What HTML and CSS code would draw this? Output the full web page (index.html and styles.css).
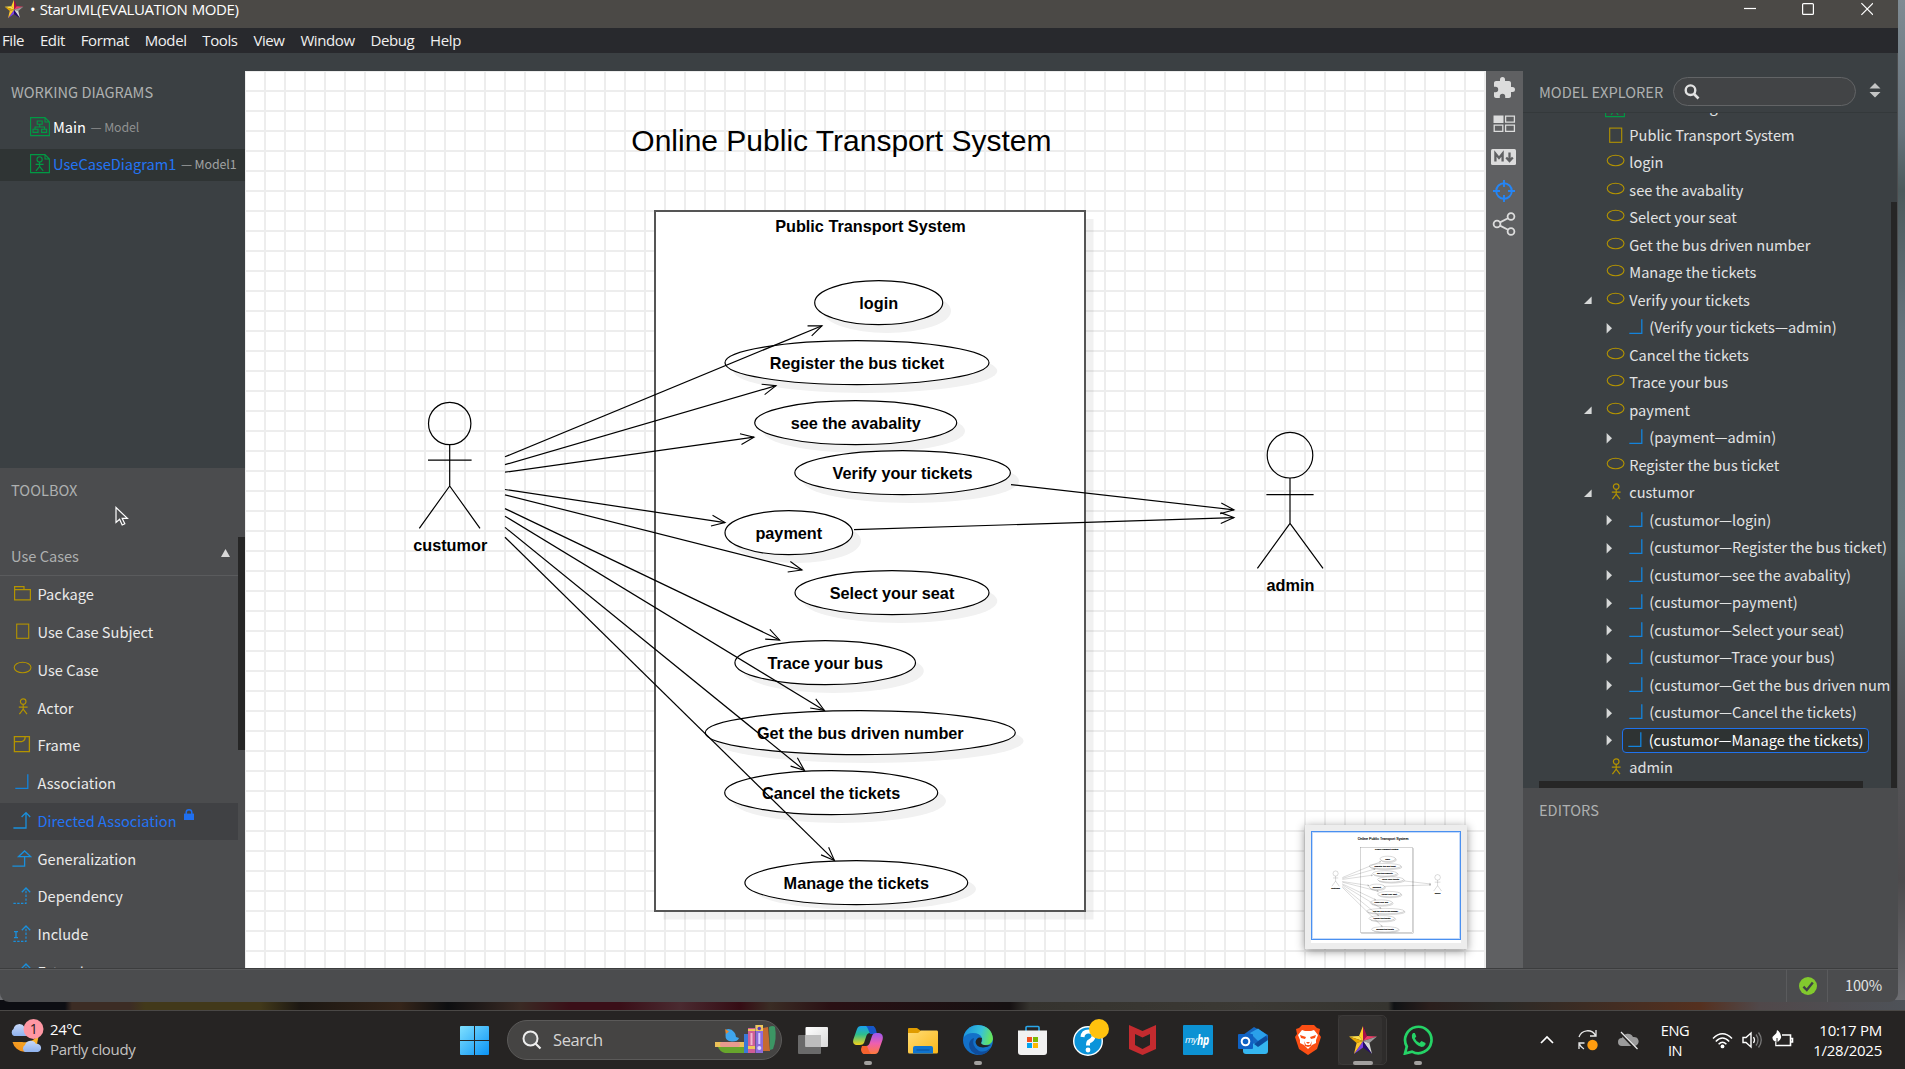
FILE: index.html
```html
<!DOCTYPE html>
<html lang="en">
<head>
<meta charset="utf-8">
<title>StarUML (EVALUATION MODE)</title>
<link rel="stylesheet" href="styles.css">
</head>
<body>
<svg class="defs" width="0" height="0" aria-hidden="true">
  <defs>
    <linearGradient id="gw" x1="0" y1="0" x2="1" y2="1"><stop offset="0" stop-color="#7fe0ff"/><stop offset="1" stop-color="#0a93f5"/></linearGradient>
    <linearGradient id="gcopA" x1="0" y1="0" x2="0" y2="1"><stop offset="0" stop-color="#18a0f0"/><stop offset=".45" stop-color="#2ebf8c"/><stop offset="1" stop-color="#f5d21a"/></linearGradient>
    <linearGradient id="gcopB" x1="0" y1="0" x2="0" y2="1"><stop offset="0" stop-color="#9a57f0"/><stop offset=".5" stop-color="#ee5fae"/><stop offset="1" stop-color="#ff7a3c"/></linearGradient>
    <linearGradient id="gfold" x1="0" y1="0" x2="1" y2="1"><stop offset="0" stop-color="#ffdc75"/><stop offset="1" stop-color="#fbb81a"/></linearGradient>
    <linearGradient id="gedge" x1="0" y1=".2" x2="1" y2=".4"><stop offset="0" stop-color="#1c93dd"/><stop offset=".6" stop-color="#37c2d8"/><stop offset="1" stop-color="#68e658"/></linearGradient>
    <linearGradient id="gpane" x1="0" y1="0" x2="1" y2="1"><stop offset="0" stop-color="#fff"/><stop offset="1" stop-color="#d9d9d9"/></linearGradient>
    <linearGradient id="gmoon" x1="0" y1="1" x2="1" y2="0"><stop offset="0" stop-color="#f08a1c"/><stop offset="1" stop-color="#fbc02d"/></linearGradient>
    <linearGradient id="gcloud" x1="0" y1="0" x2="0" y2="1"><stop offset="0" stop-color="#c7d8f8"/><stop offset="1" stop-color="#8fb2ee"/></linearGradient>
    <marker id="arrow" markerUnits="userSpaceOnUse" markerWidth="30" markerHeight="20" refX="0" refY="0" orient="auto" overflow="visible">
      <path d="M-13.4,-5.4 L0,0 L-13.4,5.4" fill="none" stroke="#000" stroke-width="1.1"/>
    </marker>
    <symbol id="i-rect" viewBox="0 0 20 20"><rect x="4.7" y="2.1" width="12" height="14.2" fill="none" stroke="#b39300" stroke-width="1.1"/></symbol>
    <symbol id="i-oval" viewBox="0 0 20 20"><ellipse cx="10.6" cy="7.5" rx="8.4" ry="5.2" fill="none" stroke="#b39300" stroke-width="1.1"/></symbol>
    <symbol id="i-actor" viewBox="0 0 20 20"><g fill="none" stroke="#b39300" stroke-width="1.2"><circle cx="11.2" cy="3.6" r="2.8"/><path d="M11.2 6.4V11.2M6.8 9.2H15.6M11.2 11.2L7.4 16.2M11.2 11.2L15 16.2"/></g></symbol>
    <symbol id="i-assoc" viewBox="0 0 20 20"><path d="M3.3 15.3H15.8V1.2" fill="none" stroke="#1383dc" stroke-width="1.3"/></symbol>
    <symbol id="i-package" viewBox="0 0 20 20"><path d="M2.6 5.6V2.6H12V5.6M2.6 5.6H18.4V15.8H2.6Z" fill="none" stroke="#b39300" stroke-width="1.2"/></symbol>
    <symbol id="i-frame" viewBox="0 0 20 20"><path d="M2.4 1.6H17.4V16.6H2.4ZM2.4 6.6H9.6Q13.2 6 13.2 1.6" fill="none" stroke="#b39300" stroke-width="1.3"/></symbol>
    <symbol id="i-dassoc" viewBox="0 0 20 20"><path d="M1.4 17H14V2.2M9.6 6L14 1.6L18.2 6" fill="none" stroke="#1990dd" stroke-width="1.3"/></symbol>
    <symbol id="i-general" viewBox="0 0 20 20"><path d="M.4 17.2H12.6V7.6M6.6 7.6L12.6 2L18.6 7.6Z" fill="none" stroke="#1990dd" stroke-width="1.3"/></symbol>
    <symbol id="i-depend" viewBox="0 0 20 20"><path d="M1.4 17.4H14V2.4" fill="none" stroke="#1990dd" stroke-width="1.2" stroke-dasharray="2.4 1.4"/><path d="M9.8 6.2L14 2L18.2 6.2" fill="none" stroke="#1990dd" stroke-width="1.3"/></symbol>
    <symbol id="i-include" viewBox="0 0 20 20"><path d="M1.4 17.4H14V2.4" fill="none" stroke="#1990dd" stroke-width="1.2" stroke-dasharray="2.4 1.4"/><path d="M9.8 6.2L14 2L18.2 6.2M2 7.6H6M4 7.6V13.6M2 13.6H6" fill="none" stroke="#1990dd" stroke-width="1.3"/></symbol>
    <symbol id="i-class" viewBox="0 0 20 20"><g fill="none" stroke="#009a44" stroke-width="1.1"><path d="M14.5 .6H.6V18.6H19.4V5L15 .6V5H19.4"/><path d="M7.2 4H12.2V7.2H7.2ZM9.7 7.2V10M5 12.2V10H14.6V12.2M3 12.2H8V15.4H3ZM11.6 12.2H16.6V15.4H11.6Z"/></g></symbol>
    <symbol id="i-usecase" viewBox="0 0 20 20"><g fill="none" stroke="#009a44" stroke-width="1.1"><path d="M14.5 .6H.6V18.6H19.4V5L15 .6V5H19.4"/><circle cx="9.6" cy="5.4" r="2.6"/><path d="M9.6 8V12.4M5.6 10.4H13.6M9.6 12.4L6 16.8M9.6 12.4L13.2 16.8"/></g></symbol>
    <symbol id="a-open" viewBox="0 0 10 10"><path d="M1 9H8.6V1.6Z" fill="#d6d8d8"/></symbol>
    <symbol id="a-closed" viewBox="0 0 10 12"><path d="M1.6 1V11.4L7 6.2Z" fill="#d6d8d8"/></symbol>
    <symbol id="star" viewBox="0 0 30 30">
      <path d="M15 1V16L11 11Z" fill="#ffd02a"/><path d="M15 1V16L19 11Z" fill="#a80f4a"/>
      <path d="M1 11.5L11 11L15 16Z" fill="#ffe04d"/><path d="M1 11.5L15 16L8.6 18Z" fill="#e8a800"/>
      <path d="M19 11L29 11.5L15 16Z" fill="#f03a66"/><path d="M29 11.5L15 16L21.4 18Z" fill="#9a9a9a"/>
      <path d="M15 16L21.4 18L24 29Z" fill="#d6d6d6"/><path d="M15 16L24 29L15 22.5Z" fill="#240a6e"/>
      <path d="M15 16V22.5L6 29Z" fill="#7a3fe0"/><path d="M15 16L6 29L8.6 18Z" fill="#ffc62e"/>
    </symbol>
  </defs>
</svg>

<div class="desktop">
  <div class="window">
    <header class="titlebar">
      <svg class="app-icon" width="20" height="20"><use href="#star"/></svg>
      <span class="title">• StarUML(EVALUATION MODE)</span>
      <svg class="win-controls" width="130" height="16" viewBox="0 0 130 16"><g fill="none" stroke="#fff" stroke-width="1.2"><path d="M1 8.5H13"/><rect x="59.6" y="3.6" width="10.8" height="10.8" rx="1"/><path d="M118.4 3.2L130 14.8M130 3.2L118.4 14.8"/></g></svg>
    </header>
    <nav class="menubar"><span>File</span><span>Edit</span><span>Format</span><span>Model</span><span>Tools</span><span>View</span><span>Window</span><span>Debug</span><span>Help</span></nav>

    <div class="workspace">
      <aside class="sidebar">
        <section class="working">
          <h2>WORKING DIAGRAMS</h2>
          <div class="doc"><svg width="20" height="20"><use href="#i-class"/></svg><b>Main</b><small>— Model</small></div>
          <div class="doc active"><svg width="20" height="20"><use href="#i-usecase"/></svg><b>UseCaseDiagram1</b><small>— Model1</small></div>
        </section>
        <section class="toolbox">
          <h2>TOOLBOX</h2>
          <div class="group"><span>Use Cases</span><svg width="9" height="8"><path d="M4.5 0L9 8H0Z" fill="#d8d8d8"/></svg></div>
          <div class="tools">
            <div class="tool"><svg width="20" height="20"><use href="#i-package"/></svg>Package</div>
            <div class="tool"><svg width="20" height="20"><use href="#i-rect"/></svg>Use Case Subject</div>
            <div class="tool"><svg width="20" height="20"><use href="#i-oval"/></svg>Use Case</div>
            <div class="tool"><svg width="20" height="20"><use href="#i-actor"/></svg>Actor</div>
            <div class="tool"><svg width="20" height="20"><use href="#i-frame"/></svg>Frame</div>
            <div class="tool"><svg width="20" height="20"><use href="#i-assoc"/></svg>Association</div>
            <div class="tool active"><svg width="20" height="20"><use href="#i-dassoc"/></svg>Directed Association<svg class="lock" width="10" height="11"><path d="M0 4.6H10V11H0Z" fill="#1f6ff0"/><path d="M2.2 5V3.4Q2.2 .8 5 .8T7.8 3.4V5" fill="none" stroke="#1f6ff0" stroke-width="1.5"/></svg></div>
            <div class="tool"><svg width="20" height="20"><use href="#i-general"/></svg>Generalization</div>
            <div class="tool"><svg width="20" height="20"><use href="#i-depend"/></svg>Dependency</div>
            <div class="tool"><svg width="20" height="20"><use href="#i-include"/></svg>Include</div>
            <div class="tool"><svg width="20" height="20"><use href="#i-include"/></svg>Extend</div>
          </div>
          <i class="scroll-thumb"></i>
          <svg class="cursor" width="15" height="21" viewBox="0 0 15 21"><path d="M1 1.5V16.5L4.6 13.2L7.2 19L9.8 17.8L7.2 12.4H12.4Z" fill="#4b4c4e" stroke="#fff" stroke-width="1.2"/></svg>
        </section>
      </aside>

      <main class="canvas">
        <svg class="diagram" width="1241" height="897" viewBox="245 71 1241 897">
          <g id="model">
            <text class="caption" x="631.3" y="151">Online Public Transport System</text>
            <rect x="663.5" y="219" width="430" height="700.5" fill="#000" fill-opacity=".055"/>
            <rect x="655" y="211" width="430" height="700" fill="#fff" stroke="#555" stroke-width="2"/>
            <g fill="#f1f1f1">
              <ellipse cx="887" cy="311" rx="64" ry="22"/><ellipse cx="865.3" cy="371" rx="132" ry="22"/><ellipse cx="864" cy="431" rx="101" ry="22"/><ellipse cx="911" cy="481" rx="108" ry="22"/><ellipse cx="797" cy="541" rx="64" ry="22"/><ellipse cx="900.3" cy="601" rx="97" ry="22"/><ellipse cx="833.5" cy="671" rx="90.3" ry="22"/><ellipse cx="868.6" cy="741" rx="155" ry="22"/><ellipse cx="839.5" cy="801" rx="106.5" ry="22"/><ellipse cx="864.6" cy="889" rx="111.4" ry="21"/>
            </g>
            <g fill="#fff" stroke="#000" stroke-width="1.2">
              <ellipse cx="878.7" cy="302.7" rx="64" ry="22"/><ellipse cx="857" cy="362.7" rx="132" ry="22"/><ellipse cx="855.7" cy="422.7" rx="101" ry="22"/><ellipse cx="902.6" cy="472.7" rx="107.8" ry="22"/><ellipse cx="788.8" cy="532.7" rx="63.8" ry="22"/><ellipse cx="892" cy="592.7" rx="97" ry="22"/><ellipse cx="825.2" cy="662.7" rx="90.3" ry="22"/><ellipse cx="860.3" cy="732.7" rx="155" ry="22"/><ellipse cx="831.2" cy="792.7" rx="106.5" ry="22"/><ellipse cx="856.3" cy="882.7" rx="111.4" ry="22"/>
            </g>
            <g class="names">
              <text x="870.4" y="232">Public Transport System</text>
              <text x="878.7" y="309">login</text><text x="857" y="369">Register the bus ticket</text><text x="855.7" y="429">see the avabality</text><text x="902.6" y="479">Verify your tickets</text><text x="788.8" y="539">payment</text><text x="892" y="599">Select your seat</text><text x="825.2" y="669">Trace your bus</text><text x="860.3" y="739">Get the bus driven number</text><text x="831.2" y="799">Cancel the tickets</text><text x="856.3" y="889">Manage the tickets</text>
              <text x="450.2" y="551">custumor</text><text x="1290.5" y="591">admin</text>
            </g>
            <g fill="none" stroke="#000" stroke-width="1.2">
              <circle cx="449.7" cy="423.5" r="21.2"/><path d="M449.7 444.7V486M428 460.2H471.6M449.7 486L419.3 528.3M449.7 486L480 528.3"/>
              <circle cx="1290" cy="455.2" r="22.8"/><path d="M1290 478V523.4M1266.4 494.6H1313.6M1290 523.4L1257.4 568.3M1290 523.4L1323 568.3"/>
              <path marker-end="url(#arrow)" d="M505 456.8L822 325.7"/><path marker-end="url(#arrow)" d="M505 464.7L776 385.7"/><path marker-end="url(#arrow)" d="M505 472.2L754 437.2"/><path marker-end="url(#arrow)" d="M505 489.5L725 522.6"/><path marker-end="url(#arrow)" d="M505 494.8L802 570"/><path marker-end="url(#arrow)" d="M505 508.6L779.6 640"/><path marker-end="url(#arrow)" d="M505 516.2L824.4 710.4"/><path marker-end="url(#arrow)" d="M505 527.4L804.4 770.4"/><path marker-end="url(#arrow)" d="M505 537.2L834.4 860.4"/>
              <path marker-end="url(#arrow)" d="M1011 484.6L1234 509.8"/><path marker-end="url(#arrow)" d="M854 529.7L1234 517.6"/>
            </g>
          </g>
        </svg>
        <div class="minimap"><svg width="150" height="112" viewBox="1311 831 150 112"><rect x="1311" y="831" width="150" height="112" fill="#fff"/><use class="mini-model" href="#model" transform="translate(1281 822.1) scale(.1214)"/><rect x="1311.5" y="831.5" width="149" height="108" fill="none" stroke="#4a90f0"/><rect x="1312.5" y="832.5" width="147" height="106" fill="none" stroke="#c4dafa"/></svg></div>
      </main>

      <div class="rail">
        <svg width="24" height="24" viewBox="0 0 24 24"><path fill="#dcdcdc" d="M20.5 11H19V7c0-1.1-.9-2-2-2h-4V3.5a2.5 2.5 0 0 0-5 0V5H4c-1.1 0-2 .9-2 2v3.8h1.500a2.700 2.700 0 0 1 0 5.400H2V20c0 1.100.9 2 2 2h3.800v-1.500a2.700 2.700 0 0 1 5.400 0V22H17c1.100 0 2-.9 2-2v-4h1.500a2.500 2.500 0 0 0 0-5z"/></svg>
        <svg width="24" height="24" viewBox="0 0 24 24"><path fill="#dcdcdc" d="M1.500 3.500H11.500V11H1.500Z"/><g fill="none" stroke="#dcdcdc" stroke-width="1.300"><path d="M13.600 4.200H22.400V10.200H13.600ZM2.200 13.200H10.800V19.400H2.200ZM13.600 13.200H22.400V19.400H13.600Z"/></g></svg>
        <svg width="25" height="24" viewBox="0 0 25 24"><rect x="0" y="4" width="25" height="16" rx="1.500" fill="#dcdcdc"/><path d="M4.400 16.500V8.500L8 13L11.600 8.500V16.500M18.500 7.500V15M15.200 12.500L18.500 16L21.800 12.500" fill="none" stroke="#5f6062" stroke-width="2.300"/></svg>
        <svg width="24" height="24" viewBox="0 0 24 24"><g fill="none" stroke="#2585f5" stroke-width="1.900"><circle cx="12" cy="12" r="7.800"/><path d="M12 1V8M12 16V23M1 12H8M16 12H23"/></g></svg>
        <svg width="24" height="24" viewBox="0 0 24 24"><g fill="none" stroke="#dcdcdc" stroke-width="1.800"><circle cx="19" cy="4.500" r="3.400"/><circle cx="19" cy="19.500" r="3.400"/><circle cx="5" cy="12" r="3.400"/><path d="M8 10.400L16 6.200M8 13.600L16 17.800"/></g></svg>
      </div>

      <aside class="explorer">
        <div class="explorer-head">
          <h2>MODEL EXPLORER</h2>
          <div class="search-box"><svg width="16" height="16" viewBox="0 0 16 16"><circle cx="6.500" cy="6.200" r="4.800" fill="none" stroke="#e2e2e2" stroke-width="2.400"/><path d="M10 10L14.500 14.500" stroke="#e2e2e2" stroke-width="2.600"/></svg></div>
          <svg class="sort" width="12" height="15"><path d="M6 0L11.500 5.600H.5ZM6 14.500L11.500 9H.5Z" fill="#c4c5c5"/></svg>
        </div>
        <div class="tree">
          <div class="rows">
            <div class="row"><i></i><svg width="20" height="20"><use href="#i-usecase"/></svg><span>UseCaseDiagram1</span></div>
            <div class="row"><i></i><svg width="20" height="20"><use href="#i-rect"/></svg><span>Public Transport System</span></div>
            <div class="row"><i></i><svg width="20" height="20"><use href="#i-oval"/></svg><span>login</span></div>
            <div class="row"><i></i><svg width="20" height="20"><use href="#i-oval"/></svg><span>see the avabality</span></div>
            <div class="row"><i></i><svg width="20" height="20"><use href="#i-oval"/></svg><span>Select your seat</span></div>
            <div class="row"><i></i><svg width="20" height="20"><use href="#i-oval"/></svg><span>Get the bus driven number</span></div>
            <div class="row"><i></i><svg width="20" height="20"><use href="#i-oval"/></svg><span>Manage the tickets</span></div>
            <div class="row"><i><svg width="10" height="10"><use href="#a-open"/></svg></i><svg width="20" height="20"><use href="#i-oval"/></svg><span>Verify your tickets</span></div>
            <div class="row child"><i><svg width="10" height="12"><use href="#a-closed"/></svg></i><svg width="20" height="20"><use href="#i-assoc"/></svg><span>(Verify your tickets—admin)</span></div>
            <div class="row"><i></i><svg width="20" height="20"><use href="#i-oval"/></svg><span>Cancel the tickets</span></div>
            <div class="row"><i></i><svg width="20" height="20"><use href="#i-oval"/></svg><span>Trace your bus</span></div>
            <div class="row"><i><svg width="10" height="10"><use href="#a-open"/></svg></i><svg width="20" height="20"><use href="#i-oval"/></svg><span>payment</span></div>
            <div class="row child"><i><svg width="10" height="12"><use href="#a-closed"/></svg></i><svg width="20" height="20"><use href="#i-assoc"/></svg><span>(payment—admin)</span></div>
            <div class="row"><i></i><svg width="20" height="20"><use href="#i-oval"/></svg><span>Register the bus ticket</span></div>
            <div class="row"><i><svg width="10" height="10"><use href="#a-open"/></svg></i><svg width="20" height="20"><use href="#i-actor"/></svg><span>custumor</span></div>
            <div class="row child"><i><svg width="10" height="12"><use href="#a-closed"/></svg></i><svg width="20" height="20"><use href="#i-assoc"/></svg><span>(custumor—login)</span></div>
            <div class="row child"><i><svg width="10" height="12"><use href="#a-closed"/></svg></i><svg width="20" height="20"><use href="#i-assoc"/></svg><span>(custumor—Register the bus ticket)</span></div>
            <div class="row child"><i><svg width="10" height="12"><use href="#a-closed"/></svg></i><svg width="20" height="20"><use href="#i-assoc"/></svg><span>(custumor—see the avabality)</span></div>
            <div class="row child"><i><svg width="10" height="12"><use href="#a-closed"/></svg></i><svg width="20" height="20"><use href="#i-assoc"/></svg><span>(custumor—payment)</span></div>
            <div class="row child"><i><svg width="10" height="12"><use href="#a-closed"/></svg></i><svg width="20" height="20"><use href="#i-assoc"/></svg><span>(custumor—Select your seat)</span></div>
            <div class="row child"><i><svg width="10" height="12"><use href="#a-closed"/></svg></i><svg width="20" height="20"><use href="#i-assoc"/></svg><span>(custumor—Trace your bus)</span></div>
            <div class="row child"><i><svg width="10" height="12"><use href="#a-closed"/></svg></i><svg width="20" height="20"><use href="#i-assoc"/></svg><span>(custumor—Get the bus driven number)</span></div>
            <div class="row child"><i><svg width="10" height="12"><use href="#a-closed"/></svg></i><svg width="20" height="20"><use href="#i-assoc"/></svg><span>(custumor—Cancel the tickets)</span></div>
            <div class="row child"><i><svg width="10" height="12"><use href="#a-closed"/></svg></i><div class="selected"><svg width="20" height="20"><use href="#i-assoc"/></svg><span>(custumor—Manage the tickets)</span></div></div>
            <div class="row"><i></i><svg width="20" height="20"><use href="#i-actor"/></svg><span>admin</span></div>
          </div>
          <i class="h-thumb"></i><i class="v-thumb"></i>
        </div>
        <section class="editors"><h2>EDITORS</h2></section>
      </aside>
    </div>

    <footer class="statusbar">
      <div class="status-ok"><svg width="18" height="18" viewBox="0 0 18 18"><circle cx="9" cy="9" r="9" fill="#82c92e"/><path d="M4.400 9.600L7.800 13L13.800 5.600" fill="none" stroke="#3f4245" stroke-width="2.400"/></svg></div>
      <div class="zoom-level">100%</div>
    </footer>
  </div>

  <div class="taskbar">
    <div class="weather">
      <svg width="34" height="38" viewBox="0 0 34 38"><path d="M2.500 24A13 13 0 0 0 27 26L29 16Q22 26 12 24Z" fill="url(#gmoon)"/><path d="M4 18a4 4 0 0 1-.5-7 6 6 0 0 1 11-2 5 5 0 0 1 2 9Z" fill="url(#gcloud)"/><path d="M15 34a4 4 0 0 1 0-7 6 6 0 0 1 11-1 4 4 0 0 1 2 8Z" fill="url(#gcloud)"/><circle cx="23.500" cy="11" r="10" fill="#ff97a3"/><text x="23.500" y="16" text-anchor="middle" class="badge-num">1</text></svg>
      <div><p>24°C</p><p class="dim">Partly cloudy</p></div>
    </div>
    <div class="apps">
      <div class="app"><svg width="29" height="29" viewBox="0 0 29 29"><path fill="url(#gw)" d="M0 1Q0 0 1 0H14V14H0ZM15 0H28Q29 0 29 1V14H15ZM0 15H14V29H1Q0 29 0 28ZM15 15H29V28Q29 29 28 29H15Z"/></svg></div>
      <div class="search">
        <svg width="20" height="20" viewBox="0 0 20 20"><circle cx="8.500" cy="8.500" r="7" fill="#5a5b5b" stroke="#eee" stroke-width="2"/><path d="M13.500 13.500L18.500 18.500" stroke="#eee" stroke-width="2.200"/></svg>
        <span>Search</span>
        <svg class="books" width="63" height="30" viewBox="0 0 63 30"><path d="M4 22H30V28H11Q6 27 4 22Z" fill="#67a52c"/><path d="M1 17H30V22H1Z" fill="#ecc158"/><rect x="6" y="17" width="20" height="5" rx="2" fill="#e89a8e"/><path d="M12 4.500Q17 3 20 7Q22 9 22 12L25 13Q24 16.500 18 16.500Q11 16 11.500 10Z" fill="#3fa5ec"/><path d="M11 4L15 6.500L12 9Z" fill="#e8862a"/><path d="M30 9H34V28H30Z" fill="#3a78d8"/><path d="M34 3H41V28H34Z" fill="#cf5d96"/><path d="M36.500 8H38.500V20H36.500Z" fill="#f0b6cf"/><path d="M41.500 0H49V28H41.500Z" fill="#8d6cdb"/><path d="M41.500 0H49V6H41.500ZM34 21H41V24H34ZM34 4H41V6H34ZM49 20H55V22H49Z" fill="#eec75a"/><circle cx="45.300" cy="3.500" r="1.800" fill="#5b3cb8"/><circle cx="45.300" cy="23" r="2" fill="#e0d4ff"/><path d="M44.300 8H46.300V19H44.300Z" fill="#d9ccff"/><path d="M49 3L54 2L56 26H49Z" fill="#c56a30"/><path d="M55 2Q59 0 61 2Q63 14 59 24L56 25Z" fill="#3c9664"/></svg>
      </div>
      <div class="app"><svg width="30" height="27" viewBox="0 0 30 27"><rect x="0" y="8" width="23" height="19" rx="1" fill="#6a6a6a"/><rect x="7.500" y="0" width="22.500" height="20" rx="1" fill="url(#gpane)"/><rect x="7.500" y="8" width="15.500" height="12" fill="#bdbdbd"/></svg></div>
      <div class="app run"><svg width="30" height="28" viewBox="0 0 30 28"><path d="M8 0H19Q22 0 21 4L20 7H17Q14 7 13 11L11 17Q10 19 7 19H3Q-1 18 .5 13L4 3Q5 0 8 0Z" fill="url(#gcopA)"/><path d="M13 0H19Q22 0 23 4L24 8H17L15 3Q14 .5 13 0Z" fill="#1656c8"/><path d="M22 28H11Q8 27 9 23L10 20H13Q16 20 17 16L19 10Q20 7 23 7H26Q31 8 29.500 14L26 24Q25 28 22 28Z" fill="url(#gcopB)"/><path d="M9 20H14L16 25Q17 27 18 28H11Q8 27 8 23Z" fill="#f5622e"/></svg></div>
      <div class="app"><svg width="30" height="27" viewBox="0 0 30 27"><path d="M0 2Q0 1 1 1H9L13 4V9H0Z" fill="#e09c00"/><path d="M0 6H10L13 3.500H29Q30 3.500 30 5V25Q30 26.500 28.500 26.500H1.500Q0 26.500 0 25Z" fill="url(#gfold)"/><path d="M5 26.500V21Q5 19 7 19H23Q25 19 25 21V26.500Z" fill="#0f74cf"/><path d="M8.500 23H21.500" stroke="#0b4e9a"/></svg></div>
      <div class="app run"><svg width="30" height="30" viewBox="0 0 30 30"><circle cx="15" cy="15" r="15" fill="#1371c9"/><path d="M1 10Q5 0 15 0Q29 1 30 14Q29 20 22 20Q18 20 18 18Q20 16 19 13Q17 8 10 8Q4 8 1 12Z" fill="url(#gedge)"/><path d="M11 13Q8 21 16 26Q22 28 27 23Q24 30 16 30Q6 28 6 19Q7 14 11 13Z" fill="#0f4d9c"/><path d="M19 13Q14 11 12.500 17Q13 22 20 22.500Q25 22 28 20Q25 20.500 21 20Q17 19 18.500 16.500Z" fill="#242322"/></svg></div>
      <div class="app"><svg width="29" height="30" viewBox="0 0 29 30"><path d="M8 6V2.500Q8 1.500 9 1.500H20Q21 1.500 21 2.500V6" fill="none" stroke="#2aa6ea" stroke-width="1.600"/><path d="M0 5.500H29V27Q29 30 26 30H3Q0 30 0 27Z" fill="#f1f1f1"/><path d="M9 12H14V17H9Z" fill="#f05020"/><path d="M15 12H20V17H15Z" fill="#7cb800"/><path d="M9 18H14V23H9Z" fill="#00a4ef"/><path d="M15 18H20V23H15Z" fill="#ffb800"/></svg></div>
      <div class="app"><svg class="over" width="36" height="37" viewBox="0 0 36 37"><circle cx="15" cy="22" r="14.300" fill="#0b94da" stroke="#fff" stroke-width="1.400"/><path d="M9.500 18Q10 12.500 15.500 12.500T20.500 17.500Q20 21 16 22.500Q15 23 15 26.500" fill="none" stroke="#fff" stroke-width="4"/><circle cx="15" cy="31" r="2.400" fill="#fff"/><circle cx="26" cy="10" r="10" fill="#ffc20e"/></svg></div>
      <div class="app"><svg width="27" height="30" viewBox="0 0 27 30"><path d="M0 0L13.500 6L27 0V24L13.500 30L0 24ZM6 9V20L13.500 24L21 20V9L13.500 12.500Z" fill="#c42b2f" fill-rule="evenodd"/></svg></div>
      <div class="app"><svg width="30" height="30" viewBox="0 0 30 30"><rect width="30" height="30" rx="1" fill="#0c92d3"/><text x="2" y="18" class="hp-my">my</text><text x="14" y="20" class="hp-hp" textLength="12" lengthAdjust="spacingAndGlyphs">hp</text></svg></div>
      <div class="app"><svg width="30" height="27" viewBox="0 0 30 27"><path d="M5 8L16 0L30 8V14L20 20H5Z" fill="#1566c0"/><path d="M12 6L20 1.500L29 8L20 14Z" fill="#2aa0ea"/><path d="M5 24V20L30 12V24Q30 27 27 27H8Q5 27 5 24Z" fill="#35b6f0"/><path d="M16 17L28 9L30 13L20 20Z" fill="#0c4b9c"/><rect x="0" y="7" width="15" height="15" rx="1" fill="#0f62c4"/><circle cx="7.500" cy="14.500" r="3.800" fill="none" stroke="#fff" stroke-width="2"/></svg></div>
      <div class="app"><svg width="26" height="30" viewBox="0 0 26 30"><path d="M7 0H19L22 3L25 4L24 9L26 12L22 24L13 30L4 24L0 12L2 9L1 4L4 3Z" fill="#fb4e14"/><path d="M7 5L10 6H16L19 5L23 10L21 15V18L17 20L13 24L9 20L5 18V15L3 10Z" fill="#fff"/><path d="M5 10L11 12L10 14L6 13ZM21 10L15 12L16 14L20 13ZM11 17H15L13 19ZM9 16L11 20H15L17 16L16 21L13 22L10 21Z" fill="#fb4e14"/></svg></div>
      <div class="app current"><i></i><svg width="30" height="30"><use href="#star"/></svg></div>
      <div class="app run"><svg width="30" height="30" viewBox="0 0 30 30"><path d="M2 28.500L3.800 21.500A13.200 13.200 0 1 1 9 26.600Z" fill="none" stroke="#25d366" stroke-width="2.700"/><path d="M10 8Q8 10 9 13Q12 20 18.500 22Q21 22 22.500 19.500V18L18.500 16L16.500 18Q13 16.500 11.800 13.300L13.300 11.500L11.800 8Z" fill="#25d366"/></svg></div>
    </div>
    <div class="tray">
      <svg width="14" height="10" viewBox="0 0 14 10"><path d="M1 8L7 2L13 8" fill="none" stroke="#fff" stroke-width="1.700"/></svg>
      <svg class="t-sync" width="22" height="22" viewBox="0 0 22 22"><path d="M2 8A9 9 0 0 1 18.500 6.500M19 1V7H13M7 20A9 9 0 0 1 2.500 15M2 20V14H7.500" fill="none" stroke="#e8e8e8" stroke-width="1.300"/><circle cx="15.500" cy="16" r="5.200" fill="#ff9c0f"/></svg>
      <svg class="t-cloud" width="21" height="19" viewBox="0 0 21 19"><path d="M4 15A4 4 0 0 1 4 7A6 6 0 0 1 15 6A4.600 4.600 0 0 1 17 15Z" fill="#9b9b9b"/><path d="M2 1L18 18" stroke="#262423" stroke-width="3"/><path d="M3 1L19.500 18" stroke="#ededed" stroke-width="1.200"/></svg>
      <div class="lang"><p>ENG</p><p>IN</p></div>
      <svg class="t-wifi" width="21" height="17" viewBox="0 0 21 17"><g fill="none" stroke="#fff" stroke-width="1.500"><path d="M1 6.500Q10.500-3 20 6.500M3.800 9.500Q10.500 2.500 17.200 9.500M6.600 12.300Q10.500 8 14.400 12.300"/></g><circle cx="10.500" cy="14.400" r="1.900" fill="#fff"/></svg>
      <svg class="t-vol" width="21" height="18" viewBox="0 0 21 18"><path d="M1 6.500H4L9 2V16L4 11.500H1Z" fill="none" stroke="#fff" stroke-width="1.400"/><path d="M11.500 6Q13.500 9 11.500 12" fill="none" stroke="#fff" stroke-width="1.300"/><path d="M14 3.500Q18 9 14 14.500M16.500 1.500Q22 9 16.500 16.500" fill="none" stroke="#777" stroke-width="1.300"/></svg>
      <svg class="t-bat" width="22" height="18" viewBox="0 0 22 18"><path d="M10 5H18.500V15.500H4V12M18.500 8.500H20.500V12H18.500" fill="none" stroke="#fff" stroke-width="1.600"/><path d="M5 0Q10 3 9 8Q8 11 5 12Q0 11 .5 7Q2 5 3 4.500Q5 3 5 0Z" fill="#fff"/><path d="M5 8V15" stroke="#262423"/></svg>
      <div class="clock"><p>10:17 PM</p><p>1/28/2025</p></div>
    </div>
  </div>
</div>
</body>
</html>
```
FILE: styles.css
```css
* { box-sizing: border-box; }
body { margin: 0; overflow: hidden; font-family: "Noto Sans CJK SC", "Noto Sans", sans-serif; font-size: 14.6px; color: #e2e3e3; }
h2, p { margin: 0; font-weight: 400; }
svg { display: block; flex: none; }
.defs { position: absolute; }

.desktop {
  width: 1905px; height: 1069px; display: flex; flex-direction: column; overflow: hidden;
  background:
    linear-gradient(90deg, #0d0e13 0 65px, #3c2c24 72px 130px, #42391a 145px 260px, #1c1712 300px, #35251a 400px, #0d0e10 448px, #3a2a24 520px, #3a0f18 570px 620px, #4a2a30 680px, #350c14 740px, #3a2c24 770px, #2a1014 830px, #161112 1010px, #35332e 1030px, #3b3934 1250px, #35342f 1388px, #101214 1394px, #2a1e1c 1430px, #2b2926 1500px, #55301f 1700px, #50484a 1760px, #4e5258) 0 1000px / 100% 11px no-repeat,
    linear-gradient(180deg, #7f8b93 0, #66737c 130px, #4d5a5c 190px, #66737c 330px, #6d7f83 550px, #5a5a5e 700px, #4c4a4c 880px, #6d6e72 1000px);
}
.window { width: 1898px; height: 1002px; display: flex; flex-direction: column; border-radius: 0 0 9px 9px; overflow: hidden; background: #4b4c4e; }
.titlebar { height: 28px; flex: none; display: flex; align-items: flex-start; background: #4b4946; color: #fff; }
.app-icon { margin: -1px 0 0 4px; }
.title { margin: -1px 0 0 6px; font: 15px/20px "Open Sans", sans-serif; letter-spacing: -.42px; word-spacing: 1px; }
.win-controls { margin: 0 25px 0 auto; }
.menubar { height: 25px; flex: none; display: flex; gap: 15.8px; padding-left: 2px; background: #28292d; font: 15px/25px "Open Sans", sans-serif; letter-spacing: -.4px; color: #f0f0f0; }

.workspace { height: 915px; flex: none; display: flex; width: 1897px; padding-top: 18px; background: #3b4043; }
.sidebar { width: 245px; display: flex; flex-direction: column; }
h2 { font-size: 14.6px; line-height: 22px; color: #aeb0b0; }
.working { height: 397px; }
.working h2 { padding: 10px 0 0 11px; height: 41px; }
.doc { height: 32px; margin-bottom: 5px; padding: 0 0 3px 30px; display: flex; align-items: center; white-space: nowrap; }
.doc svg { margin-top: 1px; }
.doc.active { background: #2f3434; }
.doc b { font-weight: 400; font-size: 14.6px; margin-left: 3px; color: #fff; }
.doc small { font-size: 12.400px; margin-left: 4.500px; letter-spacing: -.1px; color: #8f9191; }
.doc.active b { color: #2374f5; }
.doc.active small { color: #a0a2a2; }
.toolbox { position: relative; height: 500px; background: #4b4c4e; overflow: hidden; }
.toolbox h2 { padding: 11px 0 0 11px; height: 69px; }
.group { height: 39px; width: 238px; padding: 0 8px 2px 11px; display: flex; justify-content: space-between; align-items: center; border-bottom: 1px solid #5a5b5d; color: #aeb0b0; }
.group svg { margin-top: -5px; }
.tools { width: 238px; }
.tool { height: 37.750px; padding: 0 0 2px 11.500px; display: flex; align-items: center; gap: 6px; white-space: nowrap; color: #eaeaea; }
.tool svg { margin-top: 1px; }
.tool.active { background: #404144; color: #2374f5; }
.tool .lock { margin: -12px 0 0 1px; }
.scroll-thumb { position: absolute; right: 0; top: 69px; width: 7px; height: 213px; background: #262626; }
.cursor { position: absolute; left: 115px; top: 38px; }

.canvas { position: relative; width: 1241px; overflow: hidden; background-color: #fff;
  background-image: linear-gradient(90deg, #ededed 2px, transparent 2px), linear-gradient(#ededed 2px, transparent 2px);
  background-size: 20px 20px; background-position: 19px 19px; }
.caption { font: 30px "Liberation Sans", Arial, sans-serif; }
.names { font: bold 16.250px "Liberation Sans", Arial, sans-serif; text-anchor: middle; }
.mini-model { stroke: #000; stroke-width: 1px; }
.minimap { position: absolute; left: 1060px; top: 754px; width: 162px; height: 124px; padding: 6px; background: #ededed; box-shadow: 0 2px 9px rgba(0,0,0,.45); }

.rail { width: 37px; padding: 5px 2px 0 0; display: flex; flex-direction: column; align-items: center; gap: 10px; background: #5f6062; }
.rail svg:nth-child(2) { margin-top: 2px; }
.rail svg:nth-child(3) { margin-top: -1px; }
.rail svg:nth-child(5) { margin-top: -1.500px; }

.explorer { width: 374px; display: flex; flex-direction: column; }
.explorer-head { height: 42px; flex: none; display: flex; align-items: flex-start; padding-left: 16px; border-bottom: 1px solid #34393b; }
.explorer-head h2 { width: 134px; padding-top: 10px; white-space: nowrap; }
.search-box { width: 183px; height: 29px; margin-top: 6px; padding: 6px 10px; border: 1px solid #626466; border-radius: 15px; background: #424446; }
.sort { margin: 12px 0 0 13px; }
.tree { position: relative; height: 675px; overflow: hidden; padding-right: 6px; }
.rows { margin-top: -18.700px; overflow: hidden; }
.row { height: 27.500px; padding-left: 60px; display: flex; align-items: center; white-space: nowrap; }
.row > i { width: 22px; flex: none; padding-bottom: 1px; }
.row > svg { margin-right: 4.300px; }
.row span { padding-bottom: 2.400px; }
.row:first-child span { padding-bottom: 5px; }
.row.child { padding-left: 82px; }
.row.child > i { width: 21px; }
.row.child > svg { margin-right: 3.300px; }
.row .selected { display: flex; align-items: center; height: 25px; margin-left: -4px; padding: 0 5px 0 2px; gap: 3.700px; border: 1px solid #1f72ee; border-radius: 4px; background: #2e3333; color: #fff; }
.h-thumb { position: absolute; left: 16px; bottom: 0; width: 324px; height: 7px; background: #262626; }
.v-thumb { position: absolute; right: 0; top: 89px; width: 6px; bottom: 0; background: #262626; }
.editors { flex: 1; padding: 11px 0 0 16px; background: #4b4c4e; }

.statusbar { height: 34px; display: flex; justify-content: flex-end; border-top: 1px solid #3c3d3e; box-shadow: inset 0 1px #58595b; }
.status-ok { width: 42px; padding: 8px 0 0 12px; border-left: 1px solid #5a5b5d; border-right: 1px solid #5a5b5d; }
.zoom-level { width: 70px; padding-left: 17px; line-height: 31px; font-size: 14.600px; letter-spacing: -.2px; }

.taskbar { position: relative; height: 59px; margin-top: 8px; display: flex; border-top: 1px solid #4a4846; background: #262423; font: 15px/20px "Open Sans", sans-serif; letter-spacing: -.42px; color: #fff; }
.weather { width: 447px; padding: 7px 0 0 10px; display: flex; gap: 6px; }
.weather div { padding-top: 1px; }
.dim { color: #c4c2c1; letter-spacing: -.35px; }
.badge-num { font: 14px "Open Sans", sans-serif; fill: #2a1a1c; }
.apps { display: flex; align-items: center; }
.app { position: relative; width: 55px; height: 58px; display: flex; align-items: center; justify-content: center; }
.run::after, .current::after { content: ""; position: absolute; bottom: 4px; left: 24px; width: 8px; height: 4px; border-radius: 2px; background: #a2a09f; }
.current::after { left: 18px; width: 20px; }
.over { margin: -6px -7px 0 0; }
.current { background: linear-gradient(#343231, #343231) 3px 4px / 44px 50px no-repeat; }
.current i { position: absolute; left: 3px; top: 4px; width: 49px; height: 50px; border: 1px solid #3c3a39; border-radius: 5px; box-shadow: inset -4px 0 #2e2c2b; }
.search { width: 275px; height: 40px; margin: 0 3px 0 5px; padding: 0 4px 0 14px; display: flex; align-items: center; border: 1px solid #5b5a59; border-radius: 20px; background: #454443; font-size: 16.500px; color: #d6d5d4; }
.search span { margin-left: 11px; }
.books { margin-left: auto; }
.hp-my { font: italic 9.500px "Open Sans", sans-serif; fill: #fff; letter-spacing: -.5px; }
.hp-hp { font: italic bold 15px "Open Sans", sans-serif; fill: #fff; }
.tray { margin-left: auto; padding-right: 23px; display: flex; align-items: center; }
.t-sync { margin-left: 23px; }
.t-cloud { margin-left: 19px; }
.lang { width: 38px; margin: 0 18px 0 17px; text-align: center; font-size: 14.600px; }
.t-vol { margin-left: 9px; }
.t-bat { margin-left: 9px; margin-top: -2px; }
.clock { width: 88px; text-align: right; letter-spacing: -.25px; }
```
